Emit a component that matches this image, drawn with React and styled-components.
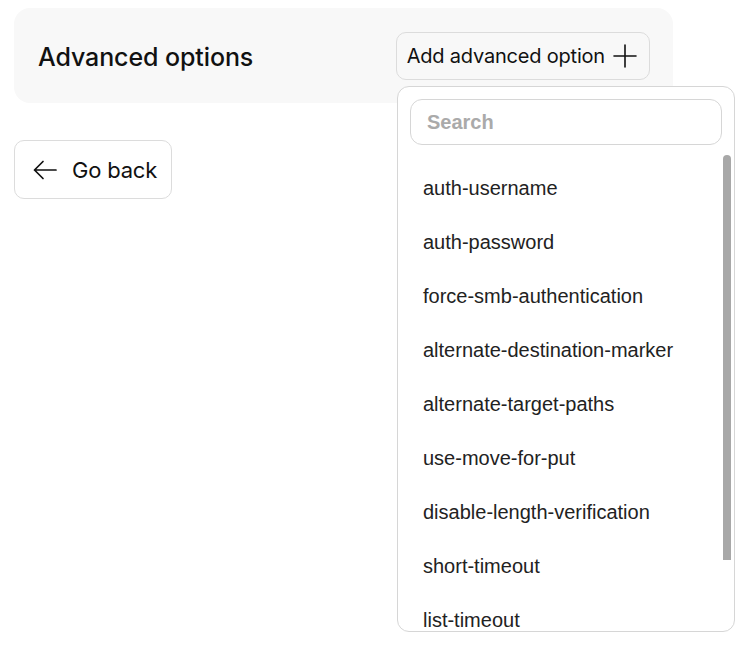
import React from 'react';
import styled, { createGlobalStyle } from 'styled-components';

const options = [
  'auth-username',
  'auth-password',
  'force-smb-authentication',
  'alternate-destination-marker',
  'alternate-target-paths',
  'use-move-for-put',
  'disable-length-verification',
  'short-timeout',
  'list-timeout',
];

const GlobalStyle = createGlobalStyle`
  html, body, #root {
    height: 100%;
  }
  body {
    margin: 0;
    background: #fff;
    font-family: Inter, "Liberation Sans", sans-serif;
    color: #111;
  }
`;

const Page = styled.div`
  min-height: 100%;
  box-sizing: border-box;
  padding: 8px 14px;
`;

const Header = styled.div`
  position: relative;
  display: flex;
  align-items: center;
  justify-content: space-between;
  width: 659px;
  height: 95px;
  padding: 0 23px 0 24px;
  box-sizing: border-box;
  background: #f8f8f8;
  border-radius: 16px;
`;

const Title = styled.h2`
  margin: 0;
  font-size: 25px;
  font-weight: 500;
  letter-spacing: -0.1px;
  color: #111;
  transform: translateY(1px);
`;

const AddButton = styled.button`
  display: flex;
  align-items: center;
  gap: 8px;
  height: 48px;
  padding: 0 12px 0 10px;
  background: transparent;
  border: 1px solid #dcdcdc;
  border-radius: 10px;
  font-family: Inter, sans-serif;
  font-size: 20px;
  font-weight: 400;
  letter-spacing: -0.2px;
  color: #111;
`;

const Dropdown = styled.div`
  position: absolute;
  top: 78px;
  left: 383px;
  width: 338px;
  height: 546px;
  box-sizing: border-box;
  border: 1px solid #d6d6d6;
  border-radius: 12px;
  background: #fff;
  padding: 12px;
  overflow: hidden;
  z-index: 10;
`;

const SearchInput = styled.input`
  display: block;
  width: 312px;
  height: 46px;
  box-sizing: border-box;
  border: 1px solid #d6d6d6;
  border-radius: 12px;
  padding: 0 16px;
  font-family: "Liberation Sans", Arial, sans-serif;
  font-size: 20px;
  font-weight: 700;
  outline: none;
  &::placeholder {
    color: #aaa;
  }
`;

const List = styled.ul`
  list-style: none;
  margin: 16px 0 0;
  padding: 0;
`;

const Item = styled.li`
  height: 54px;
  display: flex;
  align-items: center;
  padding-left: 13px;
  font-family: "Liberation Sans", Arial, sans-serif;
  font-size: 20px;
  color: #222;
`;

const ScrollThumb = styled.div`
  position: absolute;
  top: 68px;
  right: 3px;
  width: 8px;
  height: 405px;
  border-radius: 4px 4px 0 0;
  background: #a8a8a8;
`;

const BackButton = styled.button`
  display: flex;
  align-items: center;
  gap: 15px;
  margin-top: 37px;
  height: 59px;
  padding: 0 14px 0 18px;
  background: #fff;
  border: 1px solid #dcdcdc;
  border-radius: 10px;
  font-family: Inter, sans-serif;
  font-size: 22px;
  font-weight: 400;
  letter-spacing: -0.2px;
  color: #111;
`;

const PlusIcon = () => (
  <svg width="24" height="24" viewBox="0 0 24 24" fill="none" stroke="#111" strokeWidth="1.6" strokeLinecap="round">
    <path d="M12 1v22M1 12h22" />
  </svg>
);

const ArrowLeftIcon = () => (
  <svg width="24" height="20" viewBox="0 0 24 20" fill="none" stroke="#111" strokeWidth="1.7" strokeLinecap="round" strokeLinejoin="round">
    <path d="M23 10H1.5M10 1.5L1.5 10l8.5 8.5" />
  </svg>
);

const App = () => (
  <>
    <GlobalStyle />
    <Page>
      <Header>
        <Title>Advanced options</Title>
        <AddButton>
          Add advanced option
          <PlusIcon />
        </AddButton>
        <Dropdown>
          <SearchInput placeholder="Search" />
          <List>
            {options.map((o) => (
              <Item key={o}>{o}</Item>
            ))}
          </List>
          <ScrollThumb />
        </Dropdown>
      </Header>
      <BackButton>
        <ArrowLeftIcon />
        Go back
      </BackButton>
    </Page>
  </>
);

export default App;
